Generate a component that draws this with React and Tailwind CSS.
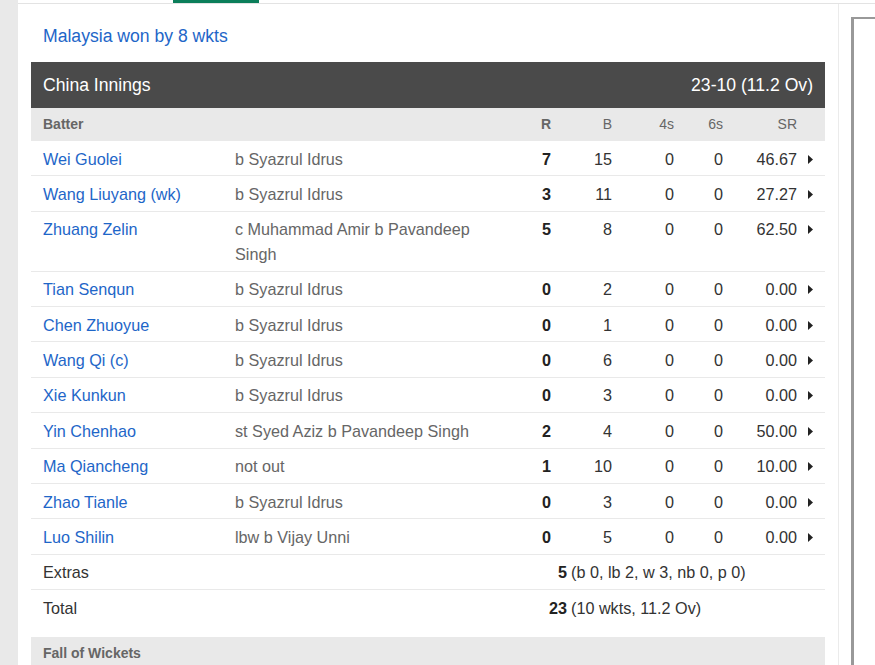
import React from "react";

const rows = [
  ["Wei Guolei", "b Syazrul Idrus", "7", "15", "0", "0", "46.67"],
  ["Wang Liuyang (wk)", "b Syazrul Idrus", "3", "11", "0", "0", "27.27"],
  ["Zhuang Zelin", "c Muhammad Amir b Pavandeep Singh", "5", "8", "0", "0", "62.50"],
  ["Tian Senqun", "b Syazrul Idrus", "0", "2", "0", "0", "0.00"],
  ["Chen Zhuoyue", "b Syazrul Idrus", "0", "1", "0", "0", "0.00"],
  ["Wang Qi (c)", "b Syazrul Idrus", "0", "6", "0", "0", "0.00"],
  ["Xie Kunkun", "b Syazrul Idrus", "0", "3", "0", "0", "0.00"],
  ["Yin Chenhao", "st Syed Aziz b Pavandeep Singh", "2", "4", "0", "0", "50.00"],
  ["Ma Qiancheng", "not out", "1", "10", "0", "0", "10.00"],
  ["Zhao Tianle", "b Syazrul Idrus", "0", "3", "0", "0", "0.00"],
  ["Luo Shilin", "lbw b Vijay Unni", "0", "5", "0", "0", "0.00"],
];

function Arrow() {
  return (
    <svg width="5" height="9" viewBox="0 0 5 9" className="mt-[8px]">
      <path d="M0 0 L5 4.5 L0 9 Z" fill="#222" />
    </svg>
  );
}

export default function App() {
  return (
    <div className="flex h-[665px] w-[875px] overflow-hidden bg-white font-['Liberation_Sans',Arial,sans-serif]">
      <div className="w-[18px] shrink-0 bg-[#e9e9e9]" />
      <div className="flex flex-1 flex-col">
        <div className="relative h-[4px] shrink-0 border-b border-[#e3e3e3]">
          <div className="absolute left-[155px] top-0 h-[3px] w-[86px] bg-[#0b7e5a]" />
        </div>
        <div className="flex flex-1">
          <main className="w-[821px] shrink-0 border-r border-[#ebebeb] px-[13px]">
            <div className="pl-[12px] pt-[22px] text-[17.6px] leading-[20px] text-[#1e66c8]">
              Malaysia won by 8 wkts
            </div>
            <div className="mt-[16px] flex h-[46px] items-center justify-between bg-[#4a4a4a] px-[12px] text-[17.6px] text-white">
              <span>China Innings</span>
              <span>23-10 (11.2 Ov)</span>
            </div>
            <div className="grid h-[33px] grid-cols-[192px_277px_51px_61px_62px_49px_74px_28px] items-center bg-[#e9e9e9] text-[14px] text-[#666]">
              <div className="pl-[12px] font-bold">Batter</div>
              <div />
              <div className="text-right font-bold">R</div>
              <div className="text-right">B</div>
              <div className="text-right">4s</div>
              <div className="text-right">6s</div>
              <div className="text-right">SR</div>
              <div />
            </div>
            {rows.map((r) => (
              <div
                key={r[0]}
                className="grid grid-cols-[192px_277px_51px_61px_62px_49px_74px_28px] border-b border-[#e9e9e9] pb-[4.5px] pt-[5.5px] text-[16.2px] leading-[24.4px] text-[#333]"
              >
                <div className="pl-[12px] text-[#1e66c8]">{r[0]}</div>
                <div className="pl-[12px] pr-[4px] text-[#666]">{r[1]}</div>
                <div className="text-right font-bold text-[#222]">{r[2]}</div>
                <div className="text-right">{r[3]}</div>
                <div className="text-right">{r[4]}</div>
                <div className="text-right">{r[5]}</div>
                <div className="text-right">{r[6]}</div>
                <div className="flex justify-start pl-[11px]">
                  <Arrow />
                </div>
              </div>
            ))}
            <div className="flex border-b border-[#e9e9e9] pb-[4.5px] pt-[5.5px] text-[16.2px] leading-[24.4px] text-[#333]">
              <div className="w-[469px] pl-[12px]">Extras</div>
              <div className="w-[67px] text-right font-bold text-[#222]">5</div>
              <div className="pl-[4px]">(b 0, lb 2, w 3, nb 0, p 0)</div>
            </div>
            <div className="flex pb-[4.5px] pt-[5.5px] text-[16.2px] leading-[24.4px] text-[#333]">
              <div className="w-[469px] pl-[12px]">Total</div>
              <div className="w-[67px] text-right font-bold text-[#222]">23</div>
              <div className="pl-[4px]">(10 wkts, 11.2 Ov)</div>
            </div>
            <div className="mt-[12px] flex h-[33px] items-center bg-[#e9e9e9] pl-[12px] text-[14px] font-bold text-[#666]">
              Fall of Wickets
            </div>
          </main>
          <aside className="flex-1 pl-[12px] pt-[13px]">
            <div className="h-full border-l-[3px] border-t-[2px] border-[#999]" />
          </aside>
        </div>
      </div>
    </div>
  );
}
